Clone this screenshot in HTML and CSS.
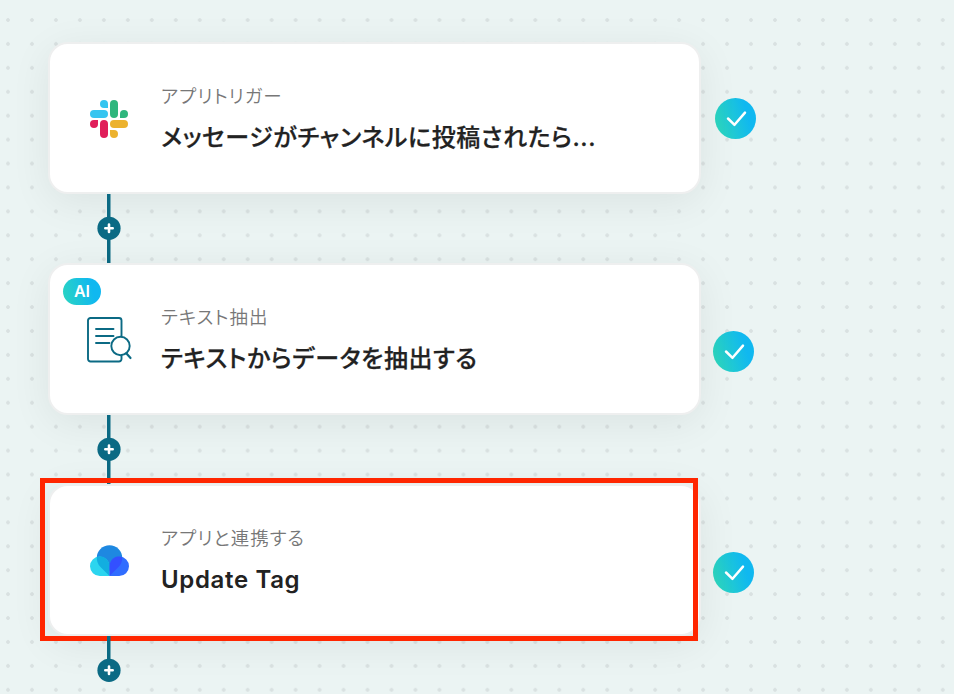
FILE: index.html
```html
<!DOCTYPE html>
<html lang="ja">
<head>
    <meta charset="UTF-8">
    <meta name="viewport" content="width=device-width, initial-scale=1.0">
    <title>フロー</title>
    <link rel="stylesheet" href="styles.css">
</head>
<body>
    <svg class="defs" width="0" height="0">
        <defs>
            <linearGradient id="grad" x1="0" y1="0.65" x2="1" y2="0.35">
                <stop offset="0.05" stop-color="#2bd5c0"/>
                <stop offset="0.8" stop-color="#10b8f0"/>
            </linearGradient>
            <symbol id="check" viewBox="0 0 41 41">
                <circle cx="20.5" cy="20.5" r="20.5" fill="url(#grad)"/>
                <path d="M13 20.5l6.5 6.3L30 14.6" fill="none" stroke="#fff" stroke-width="2.5" stroke-linecap="round" stroke-linejoin="round"/>
            </symbol>
            <symbol id="plus" viewBox="0 0 24 24">
                <circle cx="12" cy="12.3" r="11.6" fill="#0b6a84"/>
                <path d="M12 8.600v7.400M8.300 12.300h7.400" stroke="#fff" stroke-width="2.6" stroke-linecap="round"/>
            </symbol>
        </defs>
    </svg>
    <main class="flow">
        <div class="step">
            <div class="card">
                <div class="icon">
                    <svg class="slack" width="38" height="38" viewBox="0 0 38 38">
                        <g fill="#36c5f0">
                            <path d="M14 0a4 4 0 0 0 0 8h4V4a4 4 0 0 0-4-4z"/>
                            <rect x="0" y="10" width="18" height="8" rx="4"/>
                        </g>
                        <g fill="#2eb67d">
                            <rect x="20" y="0" width="8" height="18" rx="4"/>
                            <path d="M38 14a4 4 0 0 0-8 0v4h4a4 4 0 0 0 4-4z"/>
                        </g>
                        <g fill="#ecb22e">
                            <rect x="20" y="20" width="18" height="8" rx="4"/>
                            <path d="M20 30h4a4 4 0 1 1-4 4z"/>
                        </g>
                        <g fill="#e01e5a">
                            <rect x="10" y="20" width="8" height="18" rx="4"/>
                            <path d="M0 24a4 4 0 0 1 4-4h4v4a4 4 0 0 1-8 0z"/>
                        </g>
                    </svg>
                </div>
                <div class="text">
                    <p class="kind">アプリトリガー</p>
                    <h2 class="title">メッセージがチャンネルに投稿されたら...</h2>
                </div>
            </div>
            <svg class="status status-first" width="41" height="41"><use href="#check"/></svg>
        </div>
        <div class="connector"><svg width="24" height="24"><use href="#plus"/></svg></div>

        <div class="step">
            <div class="card">
                <span class="badge">AI</span>
                <div class="icon">
                    <svg class="doc" width="46" height="46" viewBox="0 0 46 46" fill="none" stroke="#0b6a84" stroke-width="1.9" stroke-linecap="round" stroke-linejoin="round">
                        <path d="M34.500 19V3.500A2.500 2.500 0 0 0 32 1H3.500A2.500 2.500 0 0 0 1 3.500V42A2.500 2.500 0 0 0 3.500 44.500H32A2.500 2.500 0 0 0 34.500 42V38.500"/>
                        <path d="M9 12h17.500M9 19h17.500M9 26h13.500"/>
                        <circle cx="33.500" cy="29" r="9.200"/>
                        <path d="M39.500 36.500l4 4.500" stroke-width="2.200"/>
                    </svg>
                </div>
                <div class="text">
                    <p class="kind">テキスト抽出</p>
                    <h2 class="title">テキストからデータを抽出する</h2>
                </div>
            </div>
            <svg class="status" width="41" height="41"><use href="#check"/></svg>
        </div>
        <div class="connector"><svg width="24" height="24"><use href="#plus"/></svg></div>

        <div class="step">
            <div class="card">
                <div class="icon">
                    <svg class="cloud" width="39" height="32" viewBox="0 0 39 32">
                        <circle cx="19.500" cy="13" r="12.800" fill="#1e88e1"/>
                        <path d="M19.500 31H9.800A9.750 9.750 0 1 1 19.500 21z" fill="#2cd5ef"/>
                        <path d="M19.500 31H29.200A9.750 9.750 0 1 0 19.500 21z" fill="#306dff"/>
                        <path d="M6.900 11.900A9.750 9.750 0 0 1 19.500 21V31L10.500 22A12.800 12.800 0 0 1 6.900 11.900z" fill="#12aee0"/>
                        <path d="M32.100 11.900A9.750 9.750 0 0 0 19.500 21V31L28.500 22A12.800 12.800 0 0 0 32.100 11.900z" fill="#3350ff"/>
                    </svg>
                </div>
                <div class="text">
                    <p class="kind">アプリと連携する</p>
                    <h2 class="title latin">Update Tag</h2>
                </div>
            </div>
            <svg class="status" width="41" height="41"><use href="#check"/></svg>
            <div class="highlight"></div>
        </div>
        <div class="connector connector-last"><svg width="24" height="24"><use href="#plus"/></svg></div>
    </main>
</body>
</html>
```
FILE: styles.css
```css
* {
    box-sizing: border-box;
}
body {
    margin: 0;
    height: 694px;
    overflow: hidden;
    font-family: Inter, "Noto Sans CJK JP", sans-serif;
    background-color: #ebf4f3;
    background-image: radial-gradient(circle at 8px 12px, #d9e1e1 1.5px, transparent 2.2px);
    background-size: 23.97px 23.93px;
    background-position: 0 8px;
}
.defs {
    position: absolute;
}
.flow {
    padding: 42px 0 0 48px;
}
.step {
    position: relative;
    display: flex;
    align-items: center;
    gap: 12px;
    height: 152px;
}
.card {
    position: relative;
    display: flex;
    align-items: center;
    width: 653px;
    height: 152px;
    border: 2px solid #eeefef;
    border-radius: 20px;
    background: #fff;
    box-shadow: 0 8px 40px rgba(0, 0, 0, 0.07);
}
.icon {
    display: flex;
    justify-content: center;
    width: 118px;
}
.slack {
    margin-top: 1px;
}
.doc {
    margin: 2px 0 0 2px;
}
.cloud {
    margin-top: 2px;
}
.text {
    margin-left: -7px;
    padding-top: 1px;
}
.kind {
    margin: 0;
    font-family: "Noto Sans CJK JP", sans-serif;
    font-size: 18.5px;
    font-weight: 350;
    font-feature-settings: "palt";
    letter-spacing: 1px;
    line-height: 26px;
    color: #777;
    white-space: nowrap;
}
.title {
    margin: 13px 0 0;
    font-size: 24px;
    font-weight: 500;
    font-feature-settings: "palt";
    letter-spacing: 0.6px;
    line-height: 34px;
    color: #222;
    -webkit-text-stroke: 0.25px #222;
    white-space: nowrap;
}
.latin {
    font-weight: 600;
    letter-spacing: 0.65px;
    -webkit-text-stroke: 0;
}
.badge {
    position: absolute;
    top: 13px;
    left: 13px;
    width: 38px;
    height: 27px;
    border-radius: 14px;
    background: linear-gradient(75deg, #2bd5c0, #10b8f0 75%);
    color: #fff;
    font-size: 16px;
    font-weight: 600;
    line-height: 27px;
    text-align: center;
}
.status {
    margin-top: 24px;
}
.status-first {
    margin: 1px 0 0 2px;
}
.connector {
    display: flex;
    align-items: center;
    justify-content: center;
    position: relative;
    width: 122px;
    height: 69px;
    padding-bottom: 1px;
    background: linear-gradient(#0b6a84, #0b6a84) center / 3.5px 100% no-repeat;
}
.connector-last {
    background-position: top;
    background-size: 3.5px 36px;
}
.highlight {
    position: absolute;
    top: -6px;
    left: -8px;
    width: 658px;
    height: 163px;
    border: 5px solid #ff2600;
}
```
